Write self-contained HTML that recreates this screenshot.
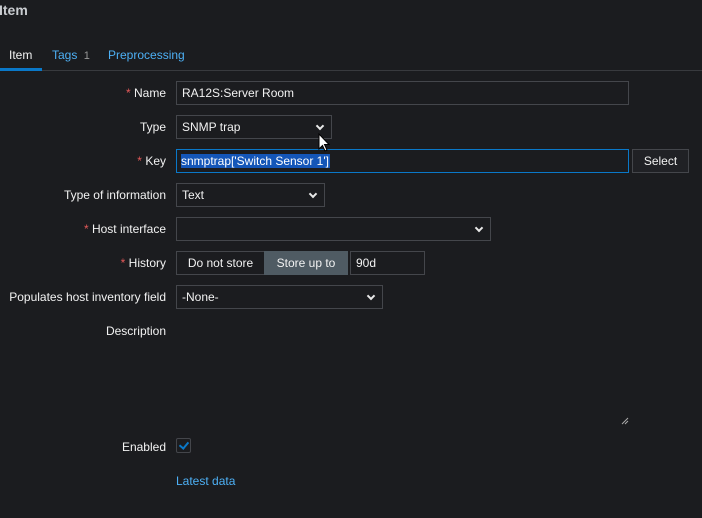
<!DOCTYPE html>
<html><head><style>
body{margin:0;width:702px;height:518px;background:#1b1c1f;font-family:"Liberation Sans",sans-serif;font-size:12px;color:#f2f2f2;position:relative;overflow:hidden}
.a{position:absolute}
.lbl{position:absolute;right:536px;text-align:right;white-space:nowrap;color:#f2f2f2}
.req:before{content:"* ";color:#e45959}
.in{position:absolute;box-sizing:border-box;border:1px solid #44464b;background:#1b1c1f;height:24px;line-height:22px;padding-left:5px;color:#f2f2f2}
.sel:after{content:"";position:absolute;right:8px;top:7px;width:4px;height:4px;border-right:2px solid #e8e8e8;border-bottom:2px solid #e8e8e8;transform:rotate(45deg)}
</style></head><body>
<div class="a" style="left:-1px;top:2px;font-size:14px;font-weight:bold;color:#c9ccd0">Item</div>
<div class="a" style="left:0;top:70px;width:702px;height:1px;background:#383a3e"></div>
<div class="a" style="left:0;top:68px;width:42px;height:3px;background:#0a78c8"></div>
<div class="a" style="left:9px;top:48px;color:#f2f2f2">Item</div>
<div class="a" style="left:52px;top:48px;color:#4db0f5">Tags <span style="color:#999;font-size:11px">&nbsp;1</span></div>
<div class="a" style="left:108px;top:48px;color:#4db0f5">Preprocessing</div>

<div class="lbl req" style="top:86px">Name</div>
<div class="in" style="left:176px;top:81px;width:453px">RA12S:Server Room</div>
<div class="lbl" style="top:120px">Type</div>
<div class="in sel" style="left:176px;top:115px;width:156px">SNMP trap</div>
<div class="lbl req" style="top:154px">Key</div>
<div class="in" style="left:176px;top:149px;width:453px;border-color:#0a78c8;padding-left:4px"><span style="background:#1456b8;color:#fff;padding-right:1px">snmptrap['Switch Sensor 1']</span></div>
<div class="in" style="left:632px;top:149px;width:57px;text-align:center;padding:0;background:#202125">Select</div>
<div class="lbl" style="top:188px">Type of information</div>
<div class="in sel" style="left:176px;top:183px;width:149px">Text</div>
<div class="lbl req" style="top:222px">Host interface</div>
<div class="in sel" style="left:176px;top:217px;width:315px"></div>
<div class="lbl req" style="top:256px">History</div>
<div class="in" style="left:176px;top:251px;width:89px;text-align:center;padding:0">Do not store</div>
<div class="in" style="left:264px;top:251px;width:84px;text-align:center;padding:0;background:#4f5b63;border-color:#4f5b63">Store up to</div>
<div class="in" style="left:350px;top:251px;width:75px">90d</div>
<div class="lbl" style="top:290px">Populates host inventory field</div>
<div class="in sel" style="left:176px;top:285px;width:207px">-None-</div>
<div class="lbl" style="top:324px">Description</div>
<svg class="a" style="left:620px;top:416px" width="10" height="10"><path d="M2 8 L8 2 M5 8 L8 5" stroke="#aaa" stroke-width="1"/></svg>
<div class="lbl" style="top:440px">Enabled</div>
<div class="a" style="left:176px;top:438px;width:15px;height:15px;box-sizing:border-box;border:1px solid #44464b;border-radius:2px"></div>
<div class="a" style="left:181px;top:440px;width:4px;height:7px;border-right:2px solid #0a78c8;border-bottom:2px solid #0a78c8;transform:rotate(40deg)"></div>
<div class="a" style="left:176px;top:474px;color:#4db0f5">Latest data</div>
<svg class="a" style="left:318px;top:133px" width="14" height="20" viewBox="0 0 14 20"><path d="M1 1 L1 16 L4.5 12.5 L7 18 L9 17 L6.5 11.5 L11 11.5 Z" fill="#fff" stroke="#000" stroke-width="1"/></svg>
</body></html>
